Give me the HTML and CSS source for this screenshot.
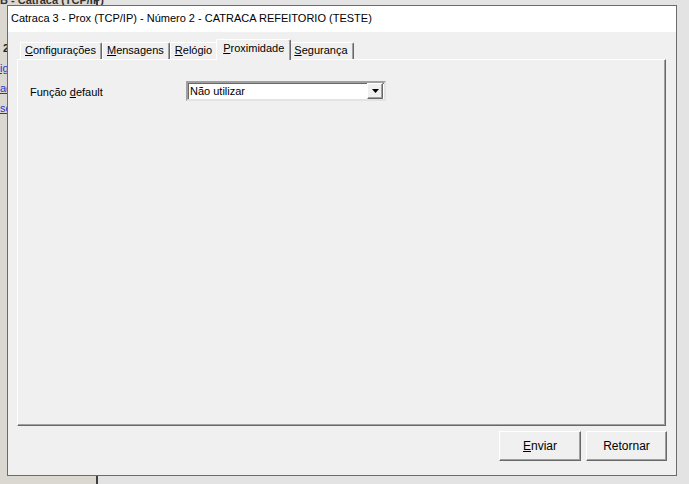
FILE: index.html
```html
<!DOCTYPE html>
<html lang="pt">
<head>
<meta charset="utf-8">
<title>Catraca 3 - Prox (TCP/IP)</title>
<link rel="stylesheet" href="styles.css">
</head>
<body>
<div class="desk">
  <div class="bg-left">
    <div class="bg-top">B - Catraca (TCP/IP)</div>
    <div class="bg-num">2</div>
    <a class="bg-link">ig</a>
    <a class="bg-link">ad</a>
    <a class="bg-link">so</a>
  </div>
  <div class="window">
    <div class="titlebar">Catraca 3 - Prox (TCP/IP) - Número 2 - CATRACA REFEITORIO (TESTE)</div>
    <div class="tabs">
      <div class="tab"><u>C</u>onfigurações</div>
      <div class="tab"><u>M</u>ensagens</div>
      <div class="tab tab-before-active"><u>R</u>elógio</div>
      <div class="tab tab-active"><u>P</u>roximidade</div>
      <div class="tab"><u>S</u>egurança</div>
    </div>
    <div class="panel">
      <div class="field">
        <label class="field-label">Função <u>d</u>efault</label>
        <div class="combo">
          <span class="combo-text">Não utilizar</span>
          <span class="combo-btn"><svg width="7" height="4" viewBox="0 0 7 4"><path d="M0 0H7L3.5 4Z" fill="#000"/></svg></span>
        </div>
      </div>
    </div>
    <div class="buttons">
      <button class="btn"><u>E</u>nviar</button>
      <button class="btn">Retornar</button>
    </div>
  </div>
</div>
</body>
</html>
```
FILE: styles.css
```css
html, body {
  margin: 0;
  padding: 0;
}
body {
  width: 689px;
  height: 484px;
  overflow: hidden;
  background: #e3e3e3;
  font-family: "Liberation Sans", Arial, sans-serif;
}
.desk {
  position: relative;
  width: 689px;
  height: 484px;
  overflow: hidden;
}
.bg-left {
  width: 96px;
  height: 484px;
  background: #dbd8d1;
  border-right: 2px solid #3f3f3f;
  display: flex;
  flex-direction: column;
  font-size: 11px;
}
.bg-top {
  margin-top: -7px;
  height: 14px;
  line-height: 14px;
  color: #333;
  white-space: nowrap;
  font-weight: bold;
}
.bg-num {
  margin-top: 35px;
  font-weight: bold;
  color: #222;
  padding-left: 3px;
  line-height: 13px;
}
.bg-link {
  color: #1a3cc8;
  text-decoration: underline;
  line-height: 13px;
  margin-top: 7px;
}
.window {
  position: absolute;
  left: 7px;
  top: 5px;
  width: 668px;
  height: 469px;
  border: 1px solid #6b6b6b;
  background: #f0f0f0;
  display: flex;
  flex-direction: column;
  color: #000;
}
.titlebar {
  height: 26px;
  line-height: 25px;
  background: #fff;
  padding-left: 3px;
  font-size: 11px;
  white-space: nowrap;
  flex: none;
}
.tabs {
  height: 27px;
  flex: none;
  display: flex;
  align-items: flex-end;
  padding-left: 12px;
  font-size: 11px;
  position: relative;
  z-index: 1;
}
.tab {
  height: 16px;
  line-height: 15px;
  padding: 0 5px 0 4px;
  border-top: 1px solid #fff;
  border-left: 1px solid #fff;
  border-right: 1px solid #696969;
  box-shadow: inset -1px 0 0 #a0a0a0;
  border-radius: 2px 2px 0 0;
  background: #f0f0f0;
  white-space: nowrap;
}
.tab-before-active {
  border-right-color: transparent;
  box-shadow: none;
}
.tab-active {
  height: 20px;
  line-height: 16px;
  margin: 0 -2px -1px -2px;
  padding: 0 6px 0 6px;
  position: relative;
}
.panel {
  flex: none;
  height: 365px;
  margin: 0 10px 0 9px;
  border: 1px solid;
  border-color: #fff #696969 #696969 #fff;
  box-shadow: inset -1px -1px 0 #a0a0a0;
}
.field {
  display: flex;
  align-items: center;
  padding: 21px 0 0 12px;
  font-size: 11px;
}
.field-label {
  width: 156px;
  padding-top: 2px;
}
.combo {
  width: 195px;
  height: 16px;
  border: 2px solid;
  border-color: #a0a0a0 #e3e3e3 #e3e3e3 #a0a0a0;
  box-shadow: inset 1px 1px 0 #696969, inset -1px -1px 0 #fff;
  background: #fff;
  display: flex;
  align-items: center;
  justify-content: space-between;
  padding-left: 1px;
}
.combo-text {
  padding-left: 1px;
  line-height: 14px;
}
.combo-btn {
  width: 14px;
  height: 14px;
  margin-right: 1px;
  background: #f0f0f0;
  border: 1px solid;
  border-color: #fff #696969 #696969 #fff;
  box-shadow: inset -1px -1px 0 #a0a0a0;
  display: flex;
  align-items: center;
  justify-content: center;
}
.combo-btn svg {
  display: block;
}
.buttons {
  flex: none;
  display: flex;
  justify-content: flex-end;
  gap: 5px;
  margin-top: 5px;
  padding-right: 9px;
}
.btn {
  width: 82px;
  height: 30px;
  margin: 0;
  padding: 0;
  background: #f0f0f0;
  border: 1px solid;
  border-color: #fff #696969 #696969 #fff;
  box-shadow: inset -1px -1px 0 #a0a0a0;
  font-family: "Liberation Sans Narrow", "Liberation Sans", Arial, sans-serif;
  font-size: 12px;
  color: #000;
}
.btn + .btn {
  width: 81px;
}
```
